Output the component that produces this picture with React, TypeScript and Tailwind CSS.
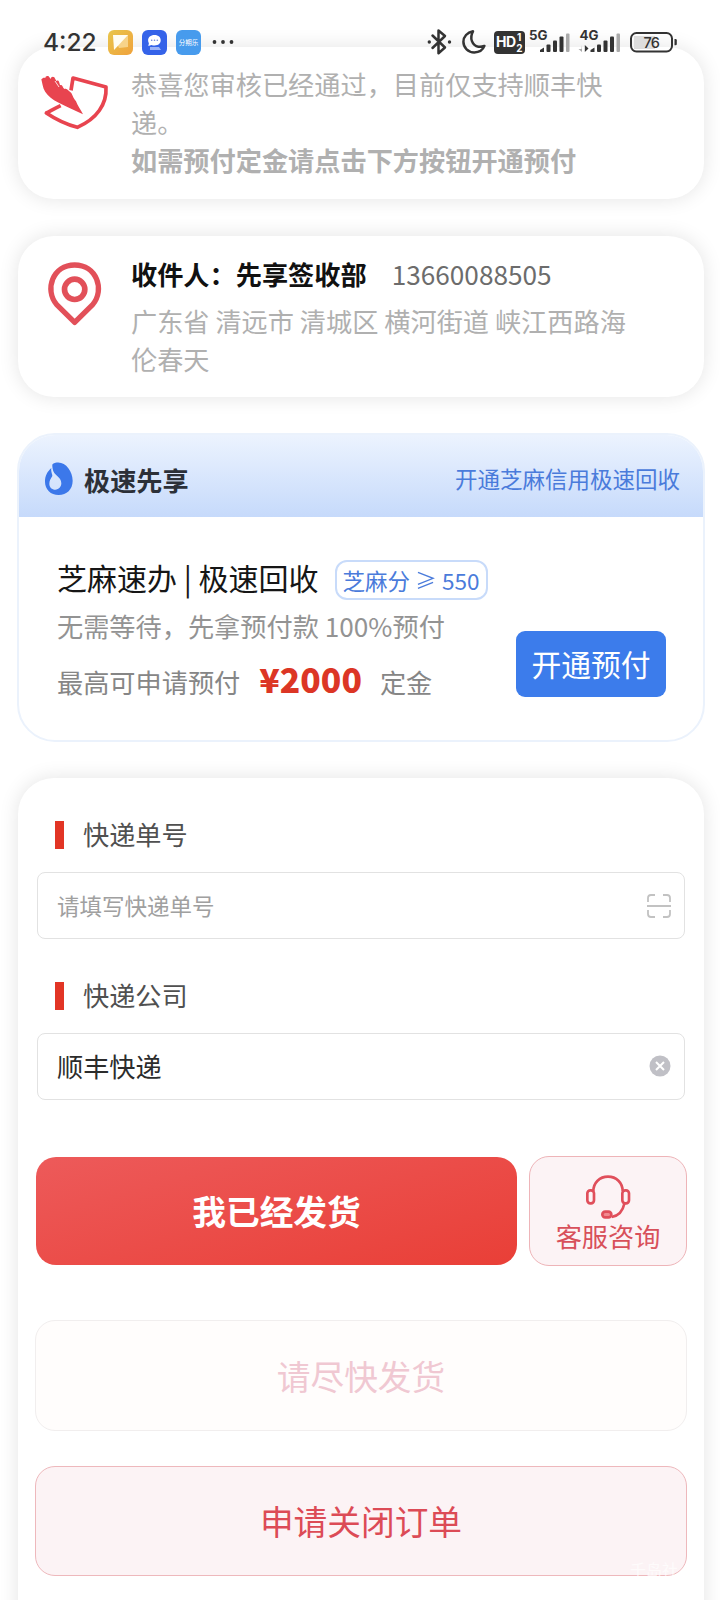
import type { ReactNode } from 'react';

const FONT = "font-['Noto_Sans_CJK_SC','Noto_Sans',sans-serif]";
const CARD = 'rounded-[36px] bg-white shadow-[0_0_20px_rgba(0,0,0,0.11)]';

export default function App() {
  return (
    <div className={`relative flex h-[1600px] w-[720px] flex-col overflow-hidden bg-white pt-[47px] pr-4 pl-[18px] ${FONT}`}>
      <StatusBar />
      <NoticeCard />
      <AddressCard />
      <PrepayCard />
      <ShippingForm />
      <span className="absolute right-[42px] bottom-[21px] text-[16px] leading-[20px] text-white/70">千岛社</span>
    </div>
  );
}

function StatusBar() {
  return (
    <div className="absolute inset-x-0 top-[27px] z-10 flex h-[30px] items-center pr-[42px] pl-[43px]">
      <span className="w-[65px] font-['Inter',sans-serif] text-[24.500px] leading-[30px] font-medium text-[#333]">4:22</span>
      <div className="flex gap-[9px]">
        <svg width="25" height="25" viewBox="0 0 25 25">
          <defs>
            <linearGradient id="gold" x1="0" y1="0" x2="1" y2="1">
              <stop offset="0" stopColor="#e8c64c" />
              <stop offset="1" stopColor="#f0a23c" />
            </linearGradient>
          </defs>
          <rect width="25" height="25" rx="6" fill="url(#gold)" />
          <path d="M5 5h15v12l-9 1z" fill="#f7d389" />
          <path d="M5 5h15L6 20z" fill="#fffdf2" />
        </svg>
        <svg width="25" height="25" viewBox="0 0 25 25">
          <rect width="25" height="25" rx="6" fill="#3563e9" />
          <path d="M8 17h9l2 3H8z" fill="#9db4f7" />
          <path d="M12.500 5c4 0 6.200 2.300 6.200 5.300 0 3.200-2.400 5.200-6 5.200-1.300 0-2.300-.2-3.200-.6L6.300 16l.6-2.700c-.6-.9-.8-1.900-.8-3C6.100 7.300 8.500 5 12.500 5z" fill="#fff" />
          <g fill="#6d86d8">
            <circle cx="9.700" cy="10.300" r=".8" />
            <circle cx="12.500" cy="10.300" r=".8" />
            <circle cx="15.300" cy="10.300" r=".8" />
          </g>
        </svg>
        <div className="flex size-[25px] items-center justify-center rounded-[6px] bg-[#479bed]">
          <span className="text-[6.500px] leading-none whitespace-nowrap text-white">分期乐</span>
        </div>
      </div>
      <svg className="ml-[11px]" width="22" height="6" viewBox="0 0 22 6" fill="#333">
        <circle cx="2.500" cy="3" r="1.900" />
        <circle cx="11" cy="3" r="1.900" />
        <circle cx="19.500" cy="3" r="1.900" />
      </svg>
      <SystemIcons />
    </div>
  );
}

function SystemIcons() {
  return (
    <svg className="ml-auto" width="252" height="30" viewBox="426 27 252 30">
      <g fill="none" stroke="#333" strokeWidth="2.500" strokeLinejoin="round" strokeLinecap="round">
        <path d="M432.500 35.500l12.500 12-6.500 5.700V30.500l6.500 5.500-12.500 12" />
        <path d="M473 31.300c-5.800 1-9.600 5.300-9.600 10.500 0 6 4.800 10.600 10.900 10.600 4.600 0 8.600-2.500 10.100-6.500-2 .8-4 1.100-6 .8-6.200-1-9.200-8.700-5.400-15.400z" />
      </g>
      <circle cx="429.300" cy="42" r="1.700" fill="#333" />
      <circle cx="449.500" cy="42" r="1.700" fill="#333" />
      <rect x="494" y="31" width="31" height="23" rx="4" fill="#333" />
      <g fill="#fff" fontFamily="Inter" fontWeight="700">
        <text x="496" y="47" fontSize="14" textLength="20">HD</text>
        <text x="517" y="41" fontSize="10">1</text>
        <text x="516.300" y="51.500" fontSize="10">2</text>
      </g>
      <g fill="#333" fontFamily="Inter" fontWeight="700" fontSize="12.500">
        <text x="529" y="39.500" textLength="18.500" lengthAdjust="spacingAndGlyphs">5G</text>
        <text x="579.500" y="39.500" textLength="19" lengthAdjust="spacingAndGlyphs">4G</text>
      </g>
      {[540, 590.5].map(x => (
        <g key={x} fill="#333">
          <path d={`M${x} 52v-2l4-2.500v4.500z`} />
          <rect x={x + 6.5} y="44.500" width="4" height="7.500" rx="1" />
          <rect x={x + 13} y="40.500" width="4" height="11.500" rx="1" />
          <rect x={x + 19.5} y="36.500" width="4" height="15.500" rx="1" />
          <rect x={x + 26} y="33.500" width="3.500" height="18.500" rx="1" fill="#aaa" />
        </g>
      ))}
      <path d="M584.800 45v7l3.700-3.500z" fill="#333" />
      <path d="M582 45v7l-3.500-3h3" fill="#aaa" />
      <rect x="634" y="36" width="21" height="13" fill="#ddd" />
      <rect x="631" y="33" width="41" height="18.500" rx="5.500" fill="none" stroke="#333" strokeWidth="2" />
      <path d="M674.500 39h1a1.300 1.300 0 0 1 1.300 1.300v3.700a1.300 1.300 0 0 1-1.300 1.300h-1z" fill="#333" />
      <text x="643.500" y="47.600" fontFamily="Inter" fontWeight="500" fontSize="14.500" fill="#333" textLength="16.500">76</text>
    </svg>
  );
}

function NoticeCard() {
  return (
    <section className={`flex h-[152px] shrink-0 pt-[18px] ${CARD}`}>
      <svg className="mt-[8px] ml-[22px] shrink-0" width="70" height="60" viewBox="120 220 210 180">
        <path
          d="M213 272l6-37 99 27c3 52-28 96-86 121-30-8-62-22-93-43 12-6 24-13 43-22"
          fill="none"
          stroke="#e8444f"
          strokeWidth="11"
          strokeLinejoin="round"
        />
        {/* quill lying over the sheet */}
        <path
          d="M249 344c-34-18-71-30-97-50-14-10-22-25-24-37l-4-18c4-5 8-6 12-4 0-5 5-8 10-5l6 8c1-6 6-9 11-5l6 11c2-3 7-2 8 2l3 10 7 1c2 3 3 7 5 9l9 3 13 11c4 8 7 17 14 25 4 11 14 25 21 39z"
          fill="#e8444f"
        />
        <path d="M165 244l12 18M184 252l10 16" stroke="#fff" strokeWidth="2.500" />
      </svg>
      <div className="ml-[21px] text-[26.200px] leading-[38px] text-[#b0b0b0]">
        <p>恭喜您审核已经通过，目前仅支持顺丰快</p>
        <p>递。</p>
        <p className="font-bold">如需预付定金请点击下方按钮开通预付</p>
      </div>
    </section>
  );
}

function AddressCard() {
  return (
    <section className={`mt-[37px] flex h-[161px] shrink-0 pt-[19px] ${CARD}`}>
      <svg className="mt-[5px] ml-[28px] shrink-0" width="58" height="68" viewBox="138 118 174 204" fill="none" stroke="#e25059">
        <path d="M224 305l-54-53c-38-46-11-119 54-119s92 73 54 119z" strokeWidth="16" strokeLinejoin="round" />
        <circle cx="224" cy="206" r="30.500" strokeWidth="17" />
      </svg>
      <div className="ml-[27px] text-[26.200px]">
        <div className="flex leading-[38px]">
          <span className="font-bold text-[#111]">收件人：先享签收部</span>
          <span className="ml-[25px] text-[#6c6c6c]">13660088505</span>
        </div>
        <p className="mt-[9px] leading-[38px] text-[#b0b0b0]">
          广东省 清远市 清城区 横河街道 峡江西路海
          <br />
          伦春天
        </p>
      </div>
    </section>
  );
}

function PrepayCard() {
  return (
    <section className="-mr-px mt-[36px] -ml-px flex h-[309px] shrink-0 flex-col overflow-hidden rounded-[38px] border-2 border-[#ebf2fc] bg-white">
      <div className="flex h-[82px] shrink-0 items-center bg-linear-to-b from-[#ecf3fe] to-[#c6dafb] pr-[23px] pl-[25px]">
        <svg className="mt-[5px]" width="30" height="35" viewBox="130 125 90 105">
          <path
            d="M156 134c30-17 60 16 60 50 0 26-18 43-42 43s-41-17-41-40c0-19 8-31 19-41-2 11 3 17 3 24-4 7-9 13-9 23 0 11 8 18 18 18s18-8 18-19c0-22-24-23-26-44-1-6-2-10 0-14z"
            fill="#3c78ea"
          />
        </svg>
        <span className="mt-[7px] ml-[10px] text-[26.200px] leading-[38px] font-bold text-[#2c3038]">极速先享</span>
        <span className="mt-[4px] ml-auto text-[22.500px] leading-[34px] text-[#4a7bdb]">开通芝麻信用极速回收</span>
      </div>
      <div className="flex grow pt-[38px] pr-[37px] pl-[38px]">
        <div>
          <div className="flex h-[46px] items-center">
            <span className="mb-[2px] text-[30px] leading-[44px] whitespace-nowrap text-[#161616]">芝麻速办 | 极速回收</span>
            <span className="mt-[3px] ml-[16px] flex h-[40px] items-center rounded-[12px] border-2 border-[#c8dbfa] px-[6px] pt-[2px] text-[22.500px] whitespace-nowrap text-[#4a7bdb]">
              芝麻分
              {/* slanted greater-or-equal sign */}
              <svg className="mr-[7px] ml-[7px]" width="18" height="19" viewBox="0 0 19 19" fill="none" stroke="#4a7bdb" strokeWidth="1.400">
                <path d="M1 1l16 6.200L1 13.500M1 17.800l16-6.300" />
              </svg>
              550
            </span>
          </div>
          <p className="mt-[6px] text-[26.200px] leading-[38px] text-[#939393]">无需等待，先拿预付款 100%预付</p>
          <p className="mt-[12px] flex items-center text-[26.200px] leading-[44px] text-[#868686]">
            最高可申请预付
            <b className="mr-[18px] mb-[5px] ml-[19px] text-[33.700px] font-black text-[#dc3625]">¥2000</b>
            定金
          </p>
        </div>
        <button className="mt-[76px] ml-auto h-[66px] w-[150px] rounded-[9px] bg-[#3c7ceb] pb-px text-[29.800px] text-white">
          开通预付
        </button>
      </div>
    </section>
  );
}

function Field({ label, children }: { label: string; children: ReactNode }) {
  return (
    <div className="mx-[19px] h-[161px]">
      <div className="flex h-[57px] items-start pl-[18px]">
        <i className="mt-[6px] h-[28px] w-[9px] bg-[#e23525]" />
        <span className="ml-[19px] text-[26.200px] leading-[38px] text-[#505050]">{label}</span>
      </div>
      <div className="flex h-[67px] items-center justify-between rounded-[8px] border-[1.500px] border-[#e2e2e2] pr-[13px] pl-[19px]">
        {children}
      </div>
    </div>
  );
}

function ShippingForm() {
  return (
    <section className={`mt-[36px] h-[900px] shrink-0 pt-[37px] ${CARD}`}>
      <Field label="快递单号">
        <span className="mt-px text-[22.500px] text-[#a0a0a0]">请填写快递单号</span>
        <svg width="24" height="24" viewBox="0 0 24 24" fill="none" stroke="#c2c2c2" strokeWidth="1.800">
          <path d="M1 8V4a3 3 0 0 1 3-3h4M16 1h4a3 3 0 0 1 3 3v4M1 16v4a3 3 0 0 0 3 3h4M16 23h4a3 3 0 0 0 3-3v-4M0 12h24" />
        </svg>
      </Field>
      <Field label="快递公司">
        <span className="mt-px text-[26.200px] text-[#2c2c2c]">顺丰快递</span>
        <svg className="mb-px" width="22" height="22" viewBox="0 0 22 22">
          <circle cx="11" cy="11" r="10.500" fill="#c0c0c6" />
          <path d="M7 7l8 8M15 7l-8 8" stroke="#fff" strokeWidth="2" />
        </svg>
      </Field>
      <div className="mt-[19px] mr-[17px] ml-[18px] flex items-center justify-between">
        <button className="h-[108px] w-[481px] rounded-[20px] bg-linear-[165deg,#ed5a5a,#e93f37] text-[33.700px] font-bold text-white">
          我已经发货
        </button>
        <button className="flex h-[110px] w-[158px] flex-col items-center rounded-[20px] border border-[#eeb4b8] bg-[#fcf3f5] pt-[17px]">
          <svg width="46" height="46" viewBox="675 131 138 138" fill="none" stroke="#e04f5b" strokeWidth="8">
            <path d="M700 183c0-26 19-44 44-44s44 18 44 44" />
            <rect x="682" y="180" width="20" height="39" rx="9" />
            <rect x="787" y="180" width="20" height="39" rx="9" />
            <path d="M793 220c-5 24-17 36-38 40" />
            <rect x="727" y="244" width="27" height="17" rx="8.500" fill="#f08a90" />
          </svg>
          <span className="-mt-[2px] text-[26.200px] leading-[36px] text-[#d8505a]">客服咨询</span>
        </button>
      </div>
      <div className="mt-[54px] mr-[17px] ml-[17px] flex flex-col gap-[35px]">
        <button className="h-[111px] rounded-[20px] border-[1.500px] border-[#f1eeee] bg-[#fffdfc] pt-px text-[33.700px] text-[#f0c8d2]">
          请尽快发货
        </button>
        <button className="h-[110px] rounded-[20px] border border-[#eeb8bc] bg-[#fcf3f5] pt-px text-[33.700px] text-[#dc4b56]">
          申请关闭订单
        </button>
      </div>
    </section>
  );
}
